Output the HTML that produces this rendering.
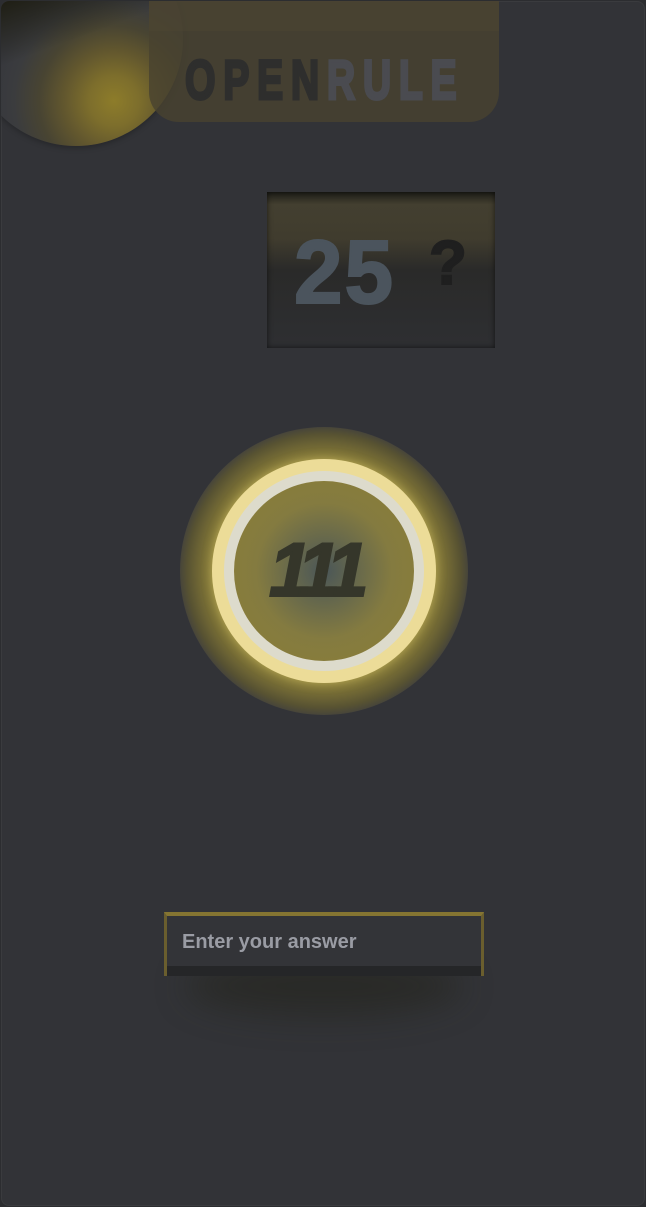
<!DOCTYPE html>
<html><head><style>
html,body{margin:0;padding:0;background:#2c2d30;}
.page{position:relative;width:644px;height:1205px;margin:1px;border-radius:8px;background:#323337;overflow:hidden;box-shadow:inset 0 0 0 1px #3a3b3e;font-family:"Liberation Sans",sans-serif;}
.ball{position:absolute;left:-32px;top:-69px;width:214px;height:214px;border-radius:50%;overflow:hidden;
background:radial-gradient(circle 120px at 145px 169px,#8d7c2a 0px,#7d6e2c 25px,#62572e 50px,#484432 75px,#3b3c3e 100px,#37383d 120px);box-shadow:0 2px 6px rgba(0,0,0,.25);}
.ball:after{content:"";position:absolute;inset:0;background:linear-gradient(160deg,rgba(25,24,10,.9) 25%,rgba(25,24,10,0) 50%);}
.head{position:absolute;left:148px;top:0;width:350px;height:121px;border-radius:0 0 30px 30px;background:rgba(72,66,48,.8);}
.head:before{content:"";position:absolute;left:0;right:0;top:0;height:30px;background:rgba(80,72,52,.35);}
.logo{position:absolute;left:184px;top:46px;font-size:56px;font-weight:bold;letter-spacing:11px;transform:scaleX(.7);transform-origin:0 0;white-space:nowrap;line-height:66px;-webkit-text-stroke:3px currentColor;}
.logo .a{color:#2e2e2d}.logo .b{color:#4a4b50}
.box{position:absolute;left:266px;top:191px;width:228px;height:156px;background:linear-gradient(#1e1e18 0,#433f30 8%,#403c2e 30%,#2a2a29 50%,#2e2f32 100%);box-shadow:inset 0 0 6px rgba(0,0,0,.6);}
.n25{position:absolute;left:293px;top:222px;font-size:90px;font-weight:bold;color:#4b545d;line-height:100px;letter-spacing:2px;-webkit-text-stroke:2px currentColor;transform:scaleX(.97);transform-origin:0 0;}
.q{position:absolute;left:428px;top:228px;font-size:62px;font-weight:bold;color:#1f1f1f;line-height:70px;-webkit-text-stroke:2px currentColor;}
.glow{position:absolute;left:179px;top:426px;width:288px;height:288px;border-radius:50%;background:radial-gradient(circle 144px at 144px 144px,#8a7e3a 0px,#857a38 112px,#7a7036 120px,#6a6234 128px,#575232 137px,#47453a 144px);}
.ring{position:absolute;left:211px;top:458px;width:224px;height:224px;border-radius:50%;background:#ecdc98;box-shadow:0 0 10px rgba(240,220,120,.5);}
.ring2{position:absolute;left:223px;top:470px;width:200px;height:200px;border-radius:50%;background:#dddbcc;}
.inner{position:absolute;left:233px;top:480px;width:180px;height:180px;border-radius:50%;background:radial-gradient(circle 90px at 90px 90px,#4a5658 0px,#66684c 32px,#847b40 68px,#877c3c 90px);}
.n111{position:absolute;left:268px;top:527px;font-size:76px;font-weight:bold;font-style:italic;color:#35362a;letter-spacing:-8px;line-height:86px;-webkit-text-stroke:2px currentColor;}
.shadow{position:absolute;left:185px;top:955px;width:276px;height:60px;border-radius:50%;background:rgba(30,30,20,.45);filter:blur(16px);}
.inp{position:absolute;left:163px;top:911px;width:320px;height:64px;box-sizing:border-box;background:#333438;border-top:4px solid #857532;border-left:3px solid #6a5e2e;border-right:3px solid #6a5e2e;}
.inp .bot{position:absolute;left:0;right:0;bottom:0;height:10px;background:#252628;}
.inp span{position:absolute;left:15px;top:15px;font-size:20px;font-weight:bold;color:#9a9ca4;}
</style></head><body><div class="page">
<div class="ball"></div>
<div class="head"></div>
<div class="logo"><span class="a">OPEN</span><span class="b">RULE</span></div>
<div class="box"></div>
<div class="n25">25</div>
<div class="q">?</div>
<div class="glow"></div>
<div class="ring"></div><div class="ring2"></div><div class="inner"></div>
<div class="n111">111</div>
<div class="shadow"></div>
<div class="inp"><div class="bot"></div><span>Enter your answer</span></div>
</div></body></html>
